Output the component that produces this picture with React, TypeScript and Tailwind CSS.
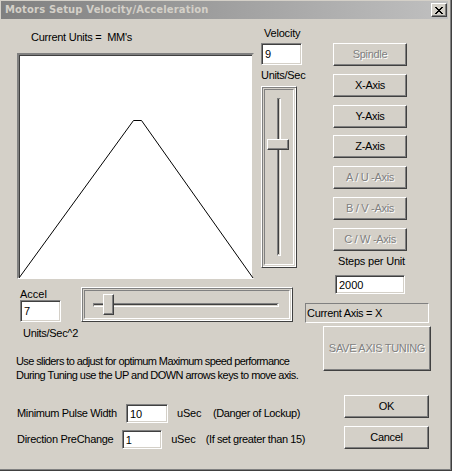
import React from "react";

const font = { fontFamily: '"Liberation Sans", Arial, sans-serif' };

function Field({ value, className = "" }: { value: string; className?: string }) {
  return (
    <div
      className={
        "bg-white border-t border-l border-t-[#808080] border-l-[#808080] border-b border-r border-b-white border-r-white shadow-[inset_1px_1px_0_#404040,inset_-1px_-1px_0_#d4d0c8] pl-[3px] text-[11px] leading-[16px] text-black flex items-center " +
        className
      }
    >
      {value}
    </div>
  );
}

function Btn({
  label,
  disabled = false,
  className = "",
}: {
  label: string;
  disabled?: boolean;
  className?: string;
}) {
  return (
    <div
      className={
        "flex items-center justify-center whitespace-nowrap bg-[#d4d0c8] border-t border-l border-t-white border-l-white border-b border-r border-b-[#404040] border-r-[#404040] shadow-[inset_-1px_-1px_0_#808080] text-[11px] tracking-[-0.3px] " +
        (disabled ? "text-[#808080] [text-shadow:1px_1px_0_#ffffff] " : "text-black ") +
        className
      }
    >
      {label}
    </div>
  );
}

function CloseX() {
  const rects = [];
  for (let i = 0; i < 7; i++) {
    rects.push(<rect key={"a" + i} x={i} y={i} width={2} height={1} fill="#000" />);
    rects.push(<rect key={"b" + i} x={6 - i} y={i} width={2} height={1} fill="#000" />);
  }
  return (
    <svg width="8" height="7" viewBox="0 0 8 7" shapeRendering="crispEdges">
      {rects}
    </svg>
  );
}

export default function App() {
  return (
    <div
      className="w-[452px] h-[471px] bg-[#d4d0c8] border-r border-b border-r-[#404040] border-b-[#404040] shadow-[inset_-1px_-1px_0_#808080] flex flex-col overflow-hidden select-none"
      style={font}
    >
      {/* Title bar */}
      <div className="ml-[1px] mt-[1px] w-[447px] h-[18px] bg-gradient-to-r from-[#808080] to-[#c0c0c0] flex items-center justify-between">
        <div
          className="pl-[4px] font-bold text-[#d4d0c8] leading-[18px] tracking-[0.15px]"
          style={{ fontFamily: '"DejaVu Sans", Verdana, sans-serif', fontSize: "10px" }}
        >
          Motors Setup Velocity/Acceleration
        </div>
        <div className="mr-[1px] w-[16px] h-[14px] bg-[#d4d0c8] border-t border-l border-t-white border-l-white border-b border-r border-b-[#404040] border-r-[#404040] shadow-[inset_-1px_-1px_0_#808080] flex items-center justify-center">
          <CloseX />
        </div>
      </div>

      {/* Body */}
      <div className="flex flex-row text-[11px] text-black whitespace-nowrap">
        {/* Left block */}
        <div className="w-[305px] flex flex-col">
          <div className="flex flex-row">
            {/* Graph column */}
            <div className="ml-[17px] w-[237px] flex flex-col">
              <div className="mt-[12px] ml-[14px] leading-[13px] h-[13px] tracking-[-0.25px]">Current Units =&nbsp; MM's</div>
              <div className="mt-[9px] w-[237px] h-[226px] bg-white border-t-2 border-l-2 border-t-[#808080] border-l-[#808080] border-b-2 border-r-2 border-b-white border-r-[#d4d0c8] shadow-[inset_1px_1px_0_#404040]">
                <svg width="233" height="222" className="overflow-visible">
                  <polyline
                    points="0,223 114.5,65.5 122.5,65.5 234,223"
                    fill="none"
                    stroke="#000"
                    strokeWidth="1"
                  />
                </svg>
              </div>
            </div>
            {/* Velocity column */}
            <div className="ml-[7px] w-[46px] flex flex-col">
              <div className="mt-[8px] ml-[3px] leading-[13px] h-[13px] tracking-[-0.2px]">Velocity</div>
              <Field value="9" className="mt-[3px] w-[41px] h-[22px]" />
              <div className="mt-[4px] leading-[13px] h-[13px] tracking-[-0.3px]">Units/Sec</div>
              <div className="mt-[4px] w-[36px] h-[182px] border border-t-white border-l-white border-b-[#404040] border-r-[#404040] shadow-[inset_1px_1px_0_#808080,inset_-1px_-1px_0_#ffffff] p-[2px]">
                <div className="w-full h-full border border-t-[#808080] border-l-[#808080] border-b-white border-r-white flex flex-col items-center relative">
                  <div className="mt-[8px] w-[4px] h-[158px] border-t border-l border-t-[#808080] border-l-[#808080] border-b border-r border-b-white border-r-white bg-[#404040] shadow-[inset_-1px_-1px_0_#d4d0c8]" />
                  <div className="absolute left-[2px] top-[49px] w-[22px] h-[11px] bg-[#d4d0c8] border-t border-l border-t-white border-l-white border-b border-r border-b-[#404040] border-r-[#404040] shadow-[inset_-1px_-1px_0_#808080]" />
                </div>
              </div>
            </div>
          </div>

          {/* Accel row */}
          <div className="mt-[8px] flex flex-row">
            <div className="ml-[20px] w-[41px] flex flex-col">
              <div className="mt-[1px] leading-[12px] h-[12px]">Accel</div>
              <Field value="7" className="w-[41px] h-[22px]" />
            </div>
            <div className="ml-[20px] w-[212px] h-[35px] border border-t-white border-l-white border-b-[#404040] border-r-[#404040] shadow-[inset_1px_1px_0_#808080,inset_-1px_-1px_0_#ffffff] p-[2px]">
              <div className="w-full h-full border border-t-[#808080] border-l-[#808080] border-b-white border-r-white flex flex-row items-center relative">
                <div className="ml-[8px] w-[186px] h-[4px] border-t border-l border-t-[#808080] border-l-[#808080] border-b border-r border-b-white border-r-white bg-[#404040] shadow-[inset_-1px_-1px_0_#d4d0c8]" />
                <div className="absolute left-[18px] top-[3px] w-[11px] h-[21px] bg-[#d4d0c8] border-t border-l border-t-white border-l-white border-b border-r border-b-[#404040] border-r-[#404040] shadow-[inset_-1px_-1px_0_#808080]" />
              </div>
            </div>
          </div>
          <div className="mt-[5px] ml-[23px] leading-[13px] h-[13px] tracking-[-0.3px]">Units/Sec^2</div>

          <div className="mt-[14px] ml-[16px] leading-[14px] tracking-[-0.6px]">
            Use sliders to adjust for optimum Maximum speed performance
          </div>
          <div className="ml-[16px] leading-[14px] tracking-[-0.55px]">
            During Tuning use the UP and DOWN arrows keys to move axis.
          </div>

          {/* bottom fields */}
          <div className="mt-[22px] flex flex-row items-center h-[19px]">
            <div className="ml-[17px] w-[109px] tracking-[-0.35px]">Minimum Pulse Width</div>
            <Field value="10" className="w-[42px] h-[19px]" />
            <div className="ml-[9px] w-[36px] tracking-[-0.2px]">uSec</div>
            <div className="tracking-[-0.4px]">(Danger of Lockup)</div>
          </div>
          <div className="mt-[7px] flex flex-row items-center h-[19px]">
            <div className="ml-[17px] w-[109px] tracking-[-0.3px]">Direction PreChange</div>
            <Field value="1" className="w-[42px] h-[19px]" />
            <div className="ml-[9px] w-[36px] tracking-[-0.2px]">uSec</div>
            <div className="tracking-[-0.4px]">(If set greater than 15)</div>
          </div>
        </div>

        {/* Right block */}
        <div className="w-[126px] flex flex-col">
          <Btn label="Spindle" disabled className="mt-[24px] ml-[28px] w-[74px] h-[23px]" />
          <Btn label="X-Axis" className="mt-[8px] ml-[28px] w-[74px] h-[23px]" />
          <Btn label="Y-Axis" className="mt-[8px] ml-[28px] w-[74px] h-[23px]" />
          <Btn label="Z-Axis" className="mt-[7px] ml-[28px] w-[74px] h-[23px]" />
          <Btn label="A / U -Axis" disabled className="mt-[8px] ml-[28px] w-[74px] h-[23px]" />
          <Btn label="B / V -Axis" disabled className="mt-[8px] ml-[28px] w-[74px] h-[23px]" />
          <Btn label="C / W -Axis" disabled className="mt-[8px] ml-[28px] w-[74px] h-[23px]" />
          <div className="mt-[4px] ml-[33px] leading-[13px] h-[13px] tracking-[-0.2px]">Steps per Unit</div>
          <Field value="2000" className="mt-[7px] ml-[30px] w-[70px] h-[19px]" />
          <div className="mt-[9px] w-[124px] h-[20px] border border-t-[#808080] border-l-[#808080] border-b-white border-r-white pl-[1px] leading-[18px] tracking-[-0.3px]">
            Current Axis = X
          </div>
          <Btn label="SAVE AXIS TUNING" disabled className="mt-[3px] ml-[18px] w-[108px] h-[45px]" />
          <Btn label="OK" className="mt-[24px] ml-[39px] w-[85px] h-[23px]" />
          <Btn label="Cancel" className="mt-[8px] ml-[39px] w-[85px] h-[23px]" />
        </div>
      </div>
    </div>
  );
}
